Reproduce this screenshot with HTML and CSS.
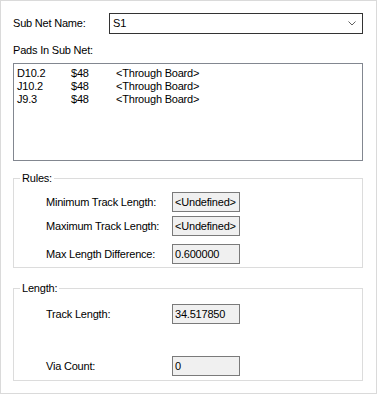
FILE: index.html
```html
<!DOCTYPE html>
<html>
<head>
<meta charset="utf-8">
<link rel="stylesheet" href="styles.css">
</head>
<body>
<div class="window">
  <div class="name-row">
    <span class="name-label">Sub Net Name:</span>
    <div class="combo">
      <span class="combo-text">S1</span>
      <svg class="chevron" width="8" height="5" viewBox="0 0 8 5"><polyline points="0.5,0.5 4,4 7.5,0.5" fill="none" stroke="#606060" stroke-width="1"/></svg>
    </div>
  </div>
  <div class="pads-label">Pads In Sub Net:</div>
  <div class="list">
    <div class="item"><span>D10.2</span><span>$48</span><span>&lt;Through Board&gt;</span></div>
    <div class="item"><span>J10.2</span><span>$48</span><span>&lt;Through Board&gt;</span></div>
    <div class="item"><span>J9.3</span><span>$48</span><span>&lt;Through Board&gt;</span></div>
  </div>
  <fieldset class="group rules">
    <legend>Rules:</legend>
    <div class="field"><span class="flabel">Minimum Track Length:</span><span class="box">&lt;Undefined&gt;</span></div>
    <div class="field f2"><span class="flabel">Maximum Track Length:</span><span class="box">&lt;Undefined&gt;</span></div>
    <div class="field f3"><span class="flabel">Max Length Difference:</span><span class="box">0.600000</span></div>
  </fieldset>
  <fieldset class="group length">
    <legend>Length:</legend>
    <div class="field"><span class="flabel">Track Length:</span><span class="box">34.517850</span></div>
    <div class="field via"><span class="flabel">Via Count:</span><span class="box">0</span></div>
  </fieldset>
</div>
</body>
</html>
```

FILE: styles.css
```css
html, body {
  margin: 0;
  padding: 0;
  background: #ffffff;
}
body {
  font-family: "Liberation Sans", Arial, sans-serif;
  font-size: 11px;
  line-height: 13px;
  letter-spacing: -0.2px;
  color: #000000;
}
.window {
  width: 377px;
  height: 394px;
  box-sizing: border-box;
  border: 1px solid #dadada;
  padding: 12px 13px 0 12px;
  background: #ffffff;
}
.name-row {
  display: flex;
  align-items: center;
  height: 21px;
}
.name-label {
  width: 96px;
}
.combo {
  flex: 1;
  height: 21px;
  box-sizing: border-box;
  border: 1px solid #333333;
  display: flex;
  align-items: center;
  padding: 0 6px 0 3px;
}
.combo-text {
  flex: 1;
}
.chevron {
  display: block;
}
.pads-label {
  margin-top: 10px;
}
.list {
  margin-top: 6px;
  height: 98px;
  box-sizing: border-box;
  border: 1px solid #828790;
  padding: 3px 3px;
}
.item {
  display: grid;
  grid-template-columns: 54px 45px auto;
  height: 13px;
}
.group {
  margin: 11px 0 0 0;
  padding: 7px 0 3px 6px;
  border: 1px solid #dcdcdc;
  min-width: 0;
}
.group legend {
  padding: 0 2px;
  margin: 0;
  line-height: 13px;
}
.length {
  margin-top: 14px;
  padding-top: 9px;
  padding-bottom: 4px;
}
.field {
  display: flex;
  align-items: center;
  height: 20px;
  padding-left: 26px;
}
.f2 {
  margin-top: 4px;
}
.f3 {
  margin-top: 8px;
}
.via {
  margin-top: 32px;
}
.flabel {
  width: 126px;
}
.box {
  width: 68px;
  height: 20px;
  box-sizing: border-box;
  border: 1px solid #7a7a7a;
  background: #f0f0f0;
  padding: 0 0 0 2px;
  display: flex;
  align-items: center;
  white-space: nowrap;
  overflow: hidden;
}
```
